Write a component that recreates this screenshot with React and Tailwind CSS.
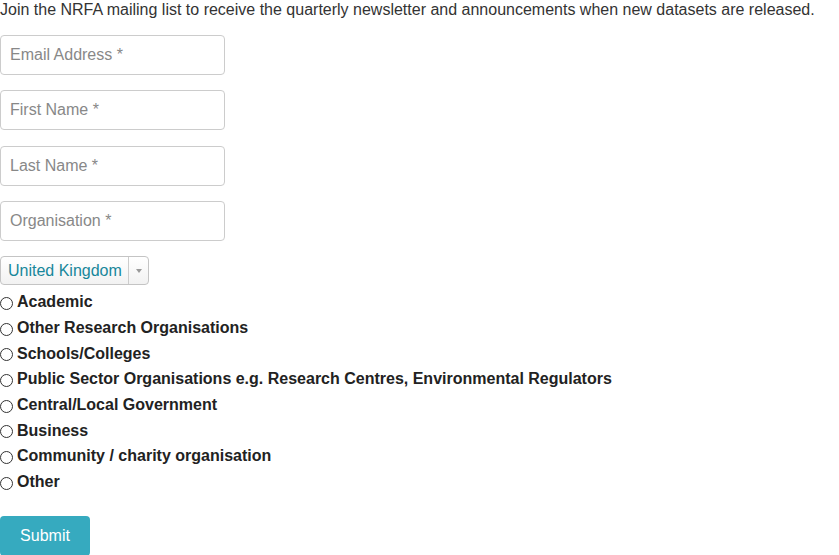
import React from "react";

const fields = ["Email Address *", "First Name *", "Last Name *", "Organisation *"];

const sectors = [
  "Academic",
  "Other Research Organisations",
  "Schools/Colleges",
  "Public Sector Organisations e.g. Research Centres, Environmental Regulators",
  "Central/Local Government",
  "Business",
  "Community / charity organisation",
  "Other",
];

const App = () => {
  return (
    <div className="w-[839px] h-[555px] overflow-hidden bg-white text-[16px] text-[#333] font-['Liberation_Sans',Arial,sans-serif]">
      <p className="leading-[20px] whitespace-nowrap">
        Join the NRFA mailing list to receive the quarterly newsletter and announcements when new datasets are released.
      </p>

      <div className="mt-[15px] flex flex-col gap-[15.4px]">
        {fields.map((f) => (
          <input
            key={f}
            type="text"
            placeholder={f}
            className="w-[225px] h-[40px] pl-[9px] pr-[10px] border border-[#ccc] rounded-[4px] text-[16px] placeholder:text-[#888] outline-none"
          />
        ))}
      </div>

      {/* Country select */}
      <div className="mt-[15px] flex w-[149px] h-[29px] border border-[#c4c4c4] rounded-[4px] bg-gradient-to-b from-white to-[#f2f2f2] overflow-hidden">
        <span className="flex-1 pl-[7px] leading-[27px] text-[#17879b] whitespace-nowrap">United Kingdom</span>
        <span className="w-[20px] border-l border-[#ccc] flex items-center justify-center">
          <svg width="6" height="4" viewBox="0 0 6 4">
            <path d="M0 0h6L3 4z" fill="#999" />
          </svg>
        </span>
      </div>

      <div className="mt-[4px]">
        {sectors.map((s) => (
          <label key={s} className="flex items-center leading-[25.7px] h-[25.7px] font-bold text-[#222] whitespace-nowrap">
            <span className="w-[13px] h-[13px] mt-[3px] mr-[4px] rounded-full border border-[#333] bg-white shrink-0" />
            {s}
          </label>
        ))}
      </div>

      <button className="mt-[21px] w-[90px] h-[40px] rounded-[4px] bg-[#36aabf] text-white text-[16px]">
        Submit
      </button>
    </div>
  );
};

export default App;
